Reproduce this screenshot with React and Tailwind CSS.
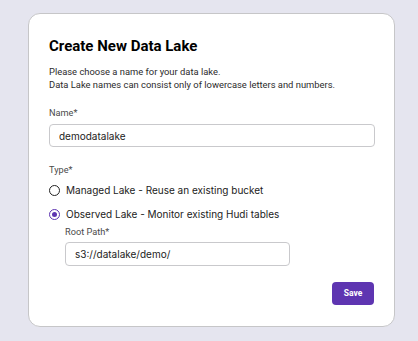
import { useState } from "react";

export default function App() {
  const [type, setType] = useState("observed");

  return (
    <main className="min-h-[341px] bg-[#e5e5ef] pt-[13px] pl-[28px]">
      <div className="w-[367px] h-[314px] rounded-[12px] border border-[#c6c6c8] bg-white px-[20px] pt-[22px] font-['Roboto',sans-serif] text-[#1f1f1f]">
        <h1 className="text-[15px] font-bold leading-[20px] text-black">Create New Data Lake</h1>
        <p className="mt-[9px] text-[9.4px] leading-[13px] text-[#2b2b2b]">
          Please choose a name for your data lake.
          <br />
          Data Lake names can consist only of lowercase letters and numbers.
        </p>

        {/* Name */}
        <label className="mt-[16px] block text-[9.2px] leading-[12px] text-[#4a4a4a]">Name*</label>
        <input
          type="text"
          defaultValue="demodatalake"
          className="mt-[5px] block h-[23px] w-[326px] rounded-[4px] border border-[#c9c9cc] px-[9px] text-[10px] text-[#222] font-['Inter',sans-serif] outline-none"
        />

        {/* Type */}
        <div className="mt-[17px] text-[9.2px] leading-[12px] text-[#4a4a4a]">Type*</div>
        <div className="mt-[8px] flex flex-col gap-[12px]">
          <label className="flex items-center gap-[6px] cursor-pointer" onClick={() => setType("managed")}>
            <span
              className={
                type === "managed"
                  ? "flex h-[11px] w-[11px] items-center justify-center rounded-full border border-[#5e35b1]"
                  : "flex h-[11px] w-[11px] items-center justify-center rounded-full border border-[#222]"
              }
            >
              {type === "managed" && <span className="h-[5px] w-[5px] rounded-full bg-[#5e35b1]" />}
            </span>
            <span className="text-[10px] leading-[12px] text-[#222] font-['Inter',sans-serif]">Managed Lake - Reuse an existing bucket</span>
          </label>
          <label className="flex items-center gap-[6px] cursor-pointer" onClick={() => setType("observed")}>
            <span
              className={
                type === "observed"
                  ? "flex h-[11px] w-[11px] items-center justify-center rounded-full border border-[#5e35b1]"
                  : "flex h-[11px] w-[11px] items-center justify-center rounded-full border border-[#222]"
              }
            >
              {type === "observed" && <span className="h-[5px] w-[5px] rounded-full bg-[#5e35b1]" />}
            </span>
            <span className="text-[10px] leading-[12px] text-[#222] font-['Inter',sans-serif]">Observed Lake - Monitor existing Hudi tables</span>
          </label>
        </div>

        {/* Root path */}
        <div className="pl-[16px]">
          <label className="mt-[6px] block text-[9.2px] leading-[12px] text-[#4a4a4a]">Root Path*</label>
          <input
            type="text"
            defaultValue="s3://datalake/demo/"
            className="mt-[4px] block h-[24px] w-[225px] rounded-[4px] border border-[#c9c9cc] px-[9px] text-[10px] text-[#222] font-['Inter',sans-serif] outline-none"
          />
        </div>

        <div className="mt-[16px] flex justify-end">
          <button className="h-[23px] w-[42px] rounded-[4px] bg-[#5e35b1] text-[8.5px] font-bold text-white">Save</button>
        </div>
      </div>
    </main>
  );
}
